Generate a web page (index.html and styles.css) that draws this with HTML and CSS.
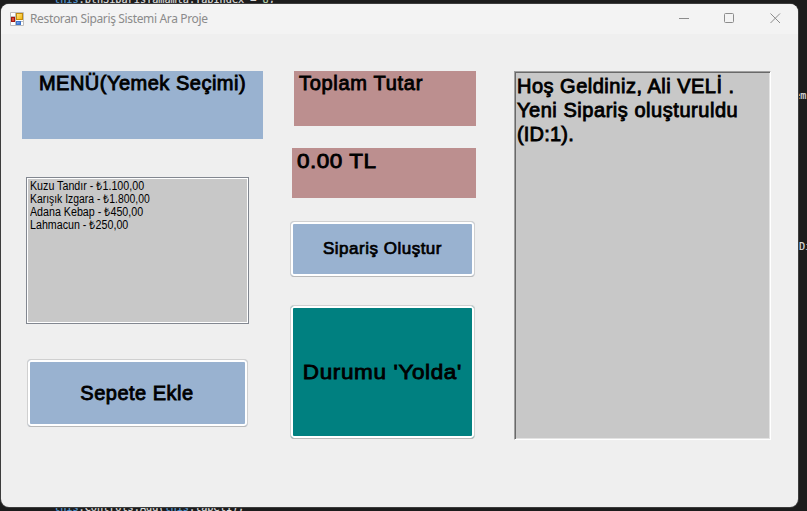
FILE: index.html
```
<!DOCTYPE html>
<html lang="tr">
<head>
<meta charset="utf-8">
<title>Restoran Sipariş Sistemi Ara Proje</title>
<link rel="stylesheet" href="styles.css">
</head>
<body>
<div class="editor">
  <div class="code code-top"><b>this</b>.btnSiparisTamamla.TabIndex = <i>8</i>;</div>
  <div class="code code-side-a">em</div>
  <div class="code code-side-b">Di</div>
  <div class="code code-bottom"><b>this</b>.Controls.Add(<b>this</b>.label1);</div>
</div>
<main class="window">
  <header class="titlebar">
    <svg class="app-icon" width="14" height="14" viewBox="0 0 14 14">
      <defs>
        <linearGradient id="gold" x2="1" y2="1"><stop stop-color="#ffe991"/><stop offset="1" stop-color="#f3b300"/></linearGradient>
        <linearGradient id="blue" x2="1" y2="1"><stop stop-color="#8fb8f5"/><stop offset="1" stop-color="#2763cb"/></linearGradient>
      </defs>
      <path d="M.5.5h13v13H.5zM5.5.5v13M.5 4.500h5M.5 9.500h13" fill="#fff" stroke="#bdbdbd"/>
      <rect x="6.500" y="1.500" width="6" height="6" fill="url(#gold)" stroke="#c28a0b"/>
      <rect x="1.500" y="5.500" width="3" height="4" fill="#d94a35" stroke="#a31511"/>
      <rect x="6.500" y="9.500" width="4" height="3" fill="url(#blue)" stroke="#3c73c9"/>
    </svg>
    <h1 class="title">Restoran Sipariş Sistemi Ara Proje</h1>
    <svg class="controls" width="104" height="12" viewBox="0 0 104 12" fill="none" stroke="#8c8c8c">
      <path d="M0 5.500h10"/>
      <rect x="45.500" y=".5" width="9" height="9" rx="1"/>
      <path d="M91.500 .5l9.500 9.500M101 .5l-9.500 9.500"/>
    </svg>
  </header>
  <div class="form">
    <section class="menu">
      <div class="label menu-label"><span>MENÜ(Yemek Seçimi)</span></div>
      <ul class="list">
        <li class="item-a">Kuzu Tandır - ₺1.100,00</li>
        <li class="item-b">Karışık Izgara - ₺1.800,00</li>
        <li class="item-c">Adana Kebap - ₺450,00</li>
        <li class="item-d">Lahmacun - ₺250,00</li>
      </ul>
      <button class="button add">Sepete Ekle</button>
    </section>
    <section class="order">
      <div class="label total-label">Toplam Tutar</div>
      <div class="label total-value"><span>0.00 TL</span></div>
      <button class="button create">Sipariş Oluştur</button>
      <button class="button status"><span>Durumu 'Yolda'</span></button>
    </section>
    <section class="log">
      <p class="line-a">Hoş Geldiniz, Ali VELİ .</p>
      <p class="line-b">Yeni Sipariş oluşturuldu</p>
      <p class="line-c">(ID:1).</p>
    </section>
  </div>
</main>
</body>
</html>
```

FILE: styles.css
```
* { box-sizing: border-box; margin: 0; padding: 0; }
body {
  width: 807px;
  height: 511px;
  overflow: hidden;
  background: #1c1c1c;
  font-family: "Liberation Sans", sans-serif;
  color: #000;
  padding: 4px 0 0 1px;
}
.editor { position: absolute; inset: 0; overflow: hidden; }
.code {
  position: absolute;
  font: 10.2px/12px "DejaVu Sans Mono", monospace;
  color: #dcdcdc;
  -webkit-text-stroke: 0.2px;
  white-space: pre;
}
.code b { font-weight: normal; color: #569cd6; }
.code i { font-style: normal; color: #b5cea8; }
.code-top { left: 54px; top: -6px; }
.code-side-a { left: 794px; top: 90px; }
.code-side-b { left: 799px; top: 241px; }
.code-bottom { left: 54px; top: 502px; }
.window {
  position: relative;
  width: 797px;
  height: 503px;
  border-radius: 8px;
  overflow: hidden;
  background: #efefef;
  box-shadow: 0 0 0 1px #3c3c3c;
}
.titlebar {
  display: flex;
  align-items: center;
  height: 30px;
  padding: 0 15px 0 9px;
  background: #f3f3f3;
}
.title {
  margin-left: 6px;
  font: 400 12px/16px "Noto Sans", sans-serif;
  letter-spacing: -0.35px;
  color: #8b8b8b;
  white-space: nowrap;
}
.controls { margin-left: auto; }
.form {
  display: flex;
  align-items: flex-start;
  padding: 37px 0 0 21px;
  font-size: 20px;
  line-height: 24px;
  letter-spacing: 0.5px;
  -webkit-text-stroke: 0.85px #000;
  white-space: nowrap;
}
.menu { width: 241px; margin-right: 27px; }
.order { width: 186px; margin-right: 38px; }
.menu-label {
  height: 68px;
  background: #99b2d0;
  text-align: center;
}
.list {
  width: 223px;
  height: 147px;
  margin: 38px 0 0 4px;
  padding: 2px 3px;
  border: 1px solid #828790;
  outline: 1px solid #fff;
  outline-offset: -2px;
  background: #c8c8c8;
  list-style: none;
  font-size: 12px;
  line-height: 13px;
  letter-spacing: 0;
  -webkit-text-stroke: 0;
}
.list li { width: max-content; transform: scaleX(0.89); transform-origin: 0 0; }
.list .item-b { transform: scaleX(0.865); }
.button {
  display: block;
  border: 1px solid #d0d0d0;
  border-bottom-color: #b9b9b9;
  border-radius: 4px;
  box-shadow: inset 0 0 0 2px #fff;
  background: #99b2d0;
  font: inherit;
  letter-spacing: inherit;
  color: #000;
  -webkit-text-stroke: inherit;
}
.add { width: 221px; height: 68px; margin: 35px 0 0 5px; padding-right: 1px; }
.total-label {
  width: 182px;
  height: 55px;
  margin-left: 4px;
  padding-left: 5px;
  background: #bc8f8f;
  letter-spacing: 0.7px;
}
.total-value {
  width: 184px;
  height: 50px;
  margin: 22px 0 0 2px;
  padding: 1px 0 0 5px;
  background: #bc8f8f;
  font-size: 21px;
}
.total-value span, .status span { display: inline-block; transform: scaleX(1.07); }
.total-value span { transform-origin: 0 0; }
.create { width: 185px; height: 56px; margin-top: 23px; font-size: 17px; -webkit-text-stroke-width: 0.7px; }
.status {
  width: 185px;
  height: 134px;
  margin-top: 28px;
  font-size: 21px;
  letter-spacing: 0.6px;
  background: teal;
}
.log {
  width: 257px;
  height: 369px;
  padding: 2px;
  border: 1px solid;
  border-color: #a0a0a0 #fff #fff #a0a0a0;
  box-shadow: inset 1px 1px #696969, inset -1px -1px #e3e3e3;
  background: #c8c8c8;
}
.line-b { letter-spacing: 0.54px; }
.line-c { letter-spacing: 0.2px; }
```
